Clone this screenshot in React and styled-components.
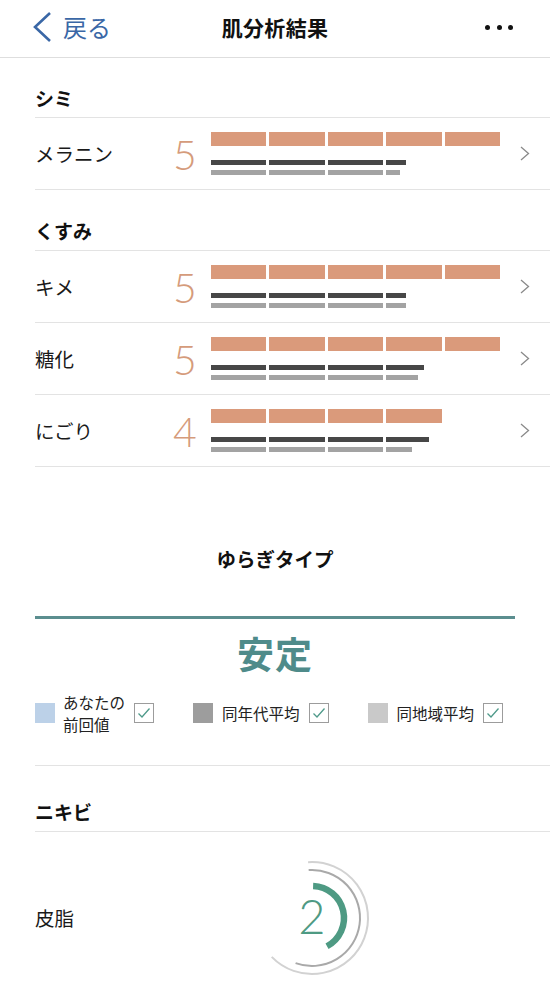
import React from "react";
import styled, { createGlobalStyle } from "styled-components";

const GlobalStyle = createGlobalStyle`
  html, body { margin: 0; padding: 0; background: #fff; }
  body {
    font-family: "Noto Sans CJK JP", "Noto Sans", sans-serif;
    color: #111;
    -webkit-font-smoothing: antialiased;
  }
`;

const Page = styled.div`
  width: 550px;
  height: 984px;
  overflow: hidden;
  background: #fff;
`;

const Header = styled.header`
  height: 54px;
  padding: 0 31px 3px;
  border-bottom: 1px solid #dedede;
  display: grid;
  grid-template-columns: 1fr auto 1fr;
  align-items: center;
`;

const Back = styled.div`
  display: flex;
  align-items: center;
  gap: 10px;
  color: #3a67a6;
  font-size: 24px;
  line-height: 1;
`;

const Title = styled.h1`
  margin: 0;
  font-size: 21px;
  font-weight: 700;
  letter-spacing: 0.3px;
`;

const More = styled.div`
  justify-self: end;
  display: flex;
  gap: 6.5px;
  padding-right: 6px;
`;

const Dot = styled.span`
  width: 5px;
  height: 5px;
  border-radius: 50%;
  background: #111;
`;

const Content = styled.div`
  padding-left: 35px;
`;

const SectionHead = styled.div`
  padding: ${(p) => p.$top}px 0 8px;
  font-size: 19px;
  line-height: 22px;
  font-weight: 700;
  border-bottom: 1px solid #e3e3e3;
`;

const Row = styled.div`
  height: 71px;
  border-bottom: 1px solid #e3e3e3;
  display: grid;
  grid-template-columns: 138px 38px 289px auto;
  align-items: center;
`;

const Label = styled.div`
  font-size: 19.5px;
  line-height: 22px;
  color: #1a1a1a;
`;

const Score = styled.div`
  font-family: Lato, "Open Sans", sans-serif;
  font-weight: 300;
  font-size: 41px;
  line-height: 1;
  color: #d59b7b;
  margin-top: 2px;
`;

const Bars = styled.div`
  display: flex;
  flex-direction: column;
`;

const Track = styled.div`
  display: flex;
  gap: 3px;
  margin-top: ${(p) => p.$mt}px;
`;

const Seg = styled.div`
  flex: 1;
  height: ${(p) => p.$h}px;
`;

const Fill = styled.div`
  height: 100%;
  background: ${(p) => p.$c};
`;

const Chevron = styled.svg`
  margin-left: 20px;
  width: 10px;
  height: 15px;
`;

const Yuragi = styled.div`
  padding: 80px 35px 0 0;
  display: flex;
  flex-direction: column;
  align-items: stretch;
  border-bottom: 1px solid #e3e3e3;
`;

const YuragiTitle = styled.div`
  text-align: center;
  font-size: 19.5px;
  line-height: 24px;
  font-weight: 700;
`;

const TealLine = styled.div`
  height: 3px;
  background: #5b8e8f;
  margin-top: 45px;
`;

const Stable = styled.div`
  text-align: center;
  font-size: 37px;
  line-height: 44px;
  font-weight: 700;
  color: #4f8b8a;
  margin-top: 12px;
  letter-spacing: 1px;
`;

const Legend = styled.div`
  display: flex;
  align-items: center;
  gap: 39px;
  margin-top: 16px;
  margin-bottom: 30px;
`;

const LegendItem = styled.div`
  display: flex;
  align-items: center;
`;

const Swatch = styled.span`
  width: 20px;
  height: 20px;
  background: ${(p) => p.$c};
  margin-right: ${(p) => p.$gap}px;
`;

const LegendText = styled.div`
  display: flex;
  flex-direction: column;
  font-size: 15.5px;
  line-height: 22px;
  color: #222;
  margin-right: 9px;
`;

const Check = styled.span`
  width: 20px;
  height: 20px;
  box-sizing: border-box;
  border: 1.5px solid #9c9c9c;
  display: flex;
  align-items: center;
  justify-content: center;
`;

const GaugeRow = styled.div`
  display: grid;
  grid-template-columns: 212px auto;
  align-items: center;
  padding-top: 21px;
`;

const GaugeBox = styled.div`
  position: relative;
  width: 130px;
  height: 130px;
`;

const GaugeNum = styled.div`
  position: absolute;
  left: 0;
  top: 0;
  width: 130px;
  height: 130px;
  display: flex;
  align-items: center;
  justify-content: center;
  font-family: Lato, "Open Sans", sans-serif;
  font-weight: 300;
  font-size: 47px;
  color: #4e9a83;
  padding: 0 0 4px 0;
  box-sizing: border-box;
`;

const BarTrack = ({ value, h, c, mt }) => (
  <Track $mt={mt}>
    {[0, 1, 2, 3, 4].map((i) => {
      const f = Math.max(0, Math.min(1, value - i));
      return (
        <Seg key={i} $h={h}>
          {f > 0 && <Fill $c={c} style={{ width: `${f * 100}%` }} />}
        </Seg>
      );
    })}
  </Track>
);

const ChevronIcon = () => (
  <Chevron viewBox="0 0 10 15">
    <path d="M1 1 L8.5 7.5 L1 14" fill="none" stroke="#8a8a8a" strokeWidth="1.3" />
  </Chevron>
);

const sections = [
  {
    title: "シミ",
    top: 29,
    items: [{ label: "メラニン", score: 5, dark: 3.36, grey: 3.25 }],
  },
  {
    title: "くすみ",
    top: 30,
    items: [
      { label: "キメ", score: 5, dark: 3.36, grey: 3.36 },
      { label: "糖化", score: 5, dark: 3.68, grey: 3.57 },
      { label: "にごり", score: 4, dark: 3.78, grey: 3.47 },
    ],
  },
];

const legend = [
  { key: "prev", color: "#bcd1e8", gap: 8, text: ["あなたの", "前回値"] },
  { key: "age", color: "#9d9d9d", gap: 9, text: ["同年代平均"] },
  { key: "area", color: "#c9c9c9", gap: 9, text: ["同地域平均"] },
];

const CheckIcon = () => (
  <svg width="14" height="12" viewBox="0 0 14 12">
    <path d="M1.5 6.5 L5 10 L12.5 1.5" fill="none" stroke="#4f9a8a" strokeWidth="1.3" />
  </svg>
);

const polar = (cx, cy, r, a) => {
  const rad = (a * Math.PI) / 180;
  return [cx + r * Math.sin(rad), cy - r * Math.cos(rad)];
};
const arc = (cx, cy, r, a0, a1) => {
  const [x0, y0] = polar(cx, cy, r, a0);
  const [x1, y1] = polar(cx, cy, r, a1);
  const large = a1 - a0 > 180 ? 1 : 0;
  return `M${x0} ${y0} A${r} ${r} 0 ${large} 1 ${x1} ${y1}`;
};

export default function App() {
  return (
    <Page>
      <GlobalStyle />
      <Header>
        <Back>
          <svg width="22" height="32" viewBox="0 0 22 32">
            <path d="M19 2 L4 16 L19 30" fill="none" stroke="#3a67a6" strokeWidth="2.6" />
          </svg>
          <span>戻る</span>
        </Back>
        <Title>肌分析結果</Title>
        <More>
          <Dot />
          <Dot />
          <Dot />
        </More>
      </Header>
      <Content>
        {sections.map((s) => (
          <React.Fragment key={s.title}>
            <SectionHead $top={s.top}>{s.title}</SectionHead>
            {s.items.map((it) => (
              <Row key={it.label}>
                <Label>{it.label}</Label>
                <Score>{it.score}</Score>
                <Bars>
                  <BarTrack value={it.score} h={14} c="#da9a7b" mt={0} />
                  <BarTrack value={it.dark} h={5} c="#474747" mt={14} />
                  <BarTrack value={it.grey} h={5} c="#a3a3a3" mt={5} />
                </Bars>
                <ChevronIcon />
              </Row>
            ))}
          </React.Fragment>
        ))}
        <Yuragi>
          <YuragiTitle>ゆらぎタイプ</YuragiTitle>
          <TealLine />
          <Stable>安定</Stable>
          <Legend>
            {legend.map((l) => (
              <LegendItem key={l.key}>
                <Swatch $c={l.color} $gap={l.gap} />
                <LegendText>
                  {l.text.map((t) => (
                    <span key={t}>{t}</span>
                  ))}
                </LegendText>
                <Check>
                  <CheckIcon />
                </Check>
              </LegendItem>
            ))}
          </Legend>
        </Yuragi>
        <SectionHead $top={35}>ニキビ</SectionHead>
        <GaugeRow>
          <Label>皮脂</Label>
          <GaugeBox>
            <svg width="130" height="130" viewBox="0 0 130 130">
              <path d={arc(65, 65, 56, -4, 226)} fill="none" stroke="#d2d2d2" strokeWidth="2" />
              <path d={arc(65, 65, 48, -4, 200)} fill="none" stroke="#a9a9a9" strokeWidth="2" />
              <path d={arc(65, 65, 32, 2, 152)} fill="none" stroke="#4e9a83" strokeWidth="6.5" />
            </svg>
            <GaugeNum>2</GaugeNum>
          </GaugeBox>
        </GaugeRow>
      </Content>
    </Page>
  );
}
